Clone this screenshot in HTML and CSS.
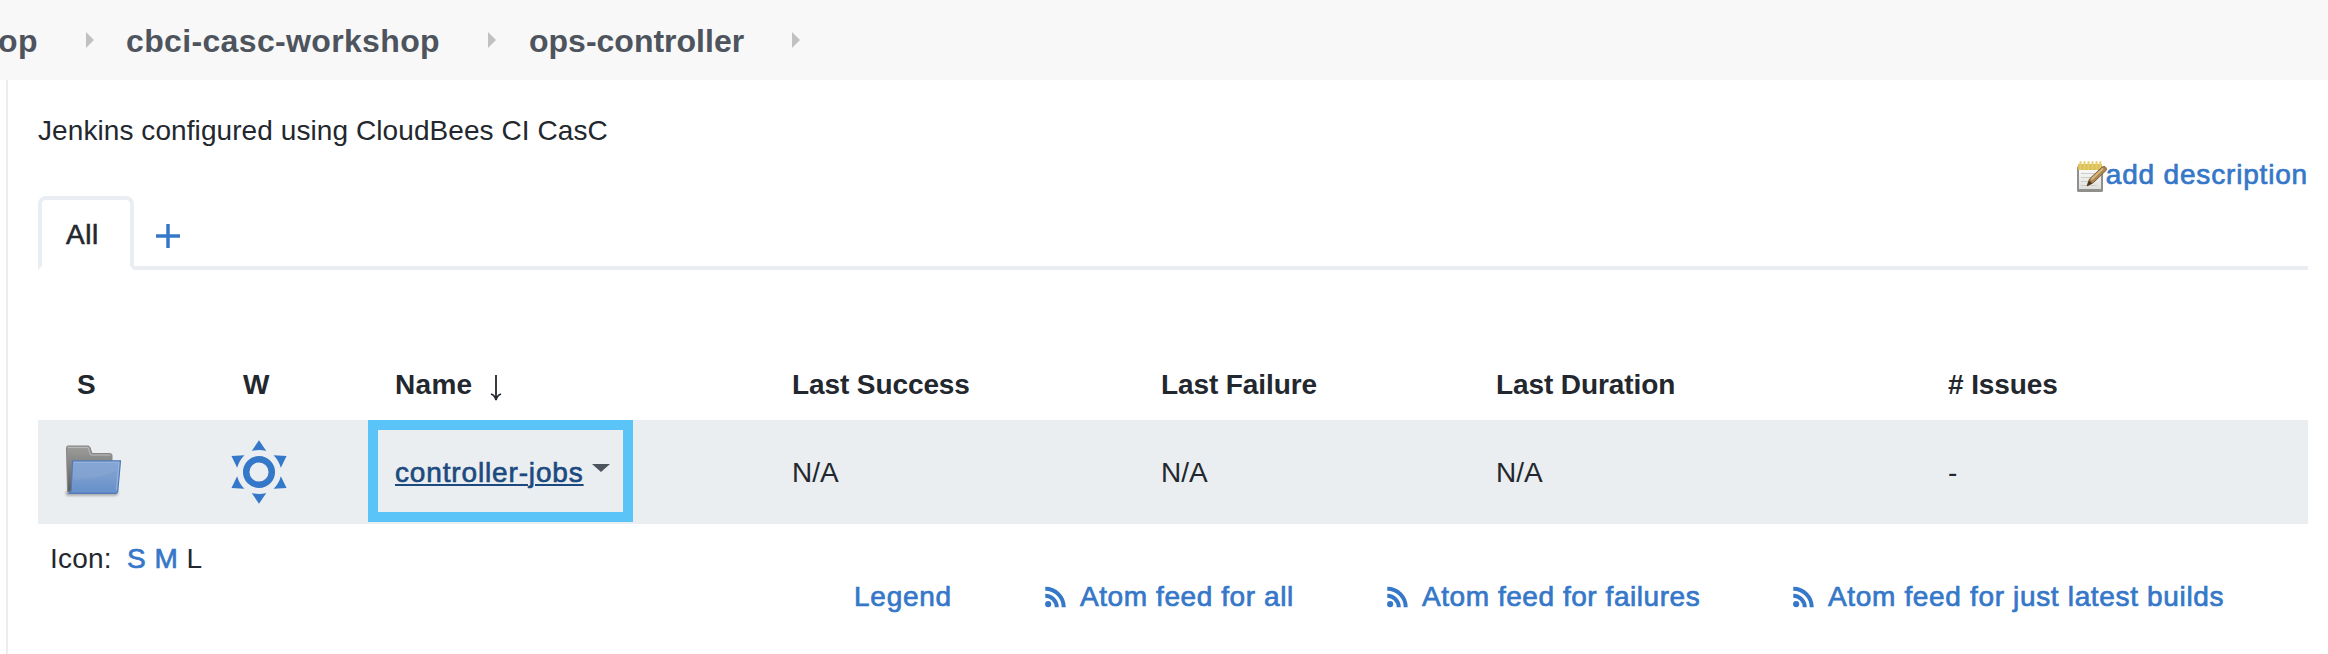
FILE: index.html
```html
<!DOCTYPE html>
<html lang="en">
<head>
<meta charset="utf-8">
<title>ops-controller</title>
<link rel="stylesheet" href="styles.css">
</head>
<body>
<nav class="breadcrumbs">
  <span class="crumb crumb-cut">op</span>
  <svg class="sep" viewBox="0 0 8 16"><path d="M0 0L8 8L0 16Z"/></svg>
  <span class="crumb crumb-workshop">cbci-casc-workshop</span>
  <svg class="sep" viewBox="0 0 8 16"><path d="M0 0L8 8L0 16Z"/></svg>
  <span class="crumb crumb-ops">ops-controller</span>
  <svg class="sep" viewBox="0 0 8 16"><path d="M0 0L8 8L0 16Z"/></svg>
</nav>
<main class="panel">
  <p class="message">Jenkins configured using CloudBees CI CasC</p>
  <div class="describe">
    <svg class="notepad" viewBox="0 0 31 32">
      <defs>
        <linearGradient id="paper" x1="0" y1="0" x2="0" y2="1"><stop offset="0" stop-color="#fdfdfd"/><stop offset="1" stop-color="#dfdfdd"/></linearGradient>
      </defs>
      <rect x="1" y="5" width="26" height="26" rx="1.5" fill="#8f908c"/>
      <rect x="3" y="5" width="22" height="23" fill="url(#paper)"/>
      <path d="M5 12.5H21M5 16.5H19M5 20.5H16M5 24.500H21" stroke="#cdcecb" stroke-width="1.2"/>
      <rect x="2" y="3" width="24" height="6" fill="#d9bd55"/>
      <path d="M4.500 1V8M8.500 1V8M12.500 1V8M16.500 1V8M20.500 1V8M24.300 1V8" stroke="#e6cd6c" stroke-width="2" stroke-linecap="round"/>
      <path d="M11 25L13.500 18L26 6.200Q30 4 30.500 9L17.500 21.500Z" fill="#ac8650" stroke="#806038" stroke-width="1"/>
      <path d="M15.500 18.500L27 7.500" stroke="#d7b987" stroke-width="1.800"/>
      <path d="M11 25L13 19.500L16.500 22.500Z" fill="#493621"/>
    </svg><a class="link">add description</a>
  </div>
  <div class="tabs">
    <div class="tab">All</div>
    <div class="tab-rest"><svg class="plus" viewBox="0 0 24 24"><path d="M12 0V24M0 12H24"/></svg></div>
  </div>
  <div class="jobs">
    <div class="row head">
      <span class="cell c-s">S</span>
      <span class="cell c-w">W</span>
      <span class="cell c-name"><span class="name">Name</span><svg class="arrow" viewBox="0 0 12 26"><path d="M6 0V24M1 19Q5 20.500 6 25Q7 20.500 11 19" /></svg></span>
      <span class="cell">Last Success</span>
      <span class="cell">Last Failure</span>
      <span class="cell">Last Duration</span>
      <span class="cell"># Issues</span>
    </div>
    <div class="row item">
      <svg class="folder" viewBox="0 0 60 56">
        <defs>
          <linearGradient id="back" x1="0" y1="0" x2="0" y2="1"><stop offset="0" stop-color="#9d9d9b"/><stop offset="1" stop-color="#5e5e5e"/></linearGradient>
          <linearGradient id="front" x1="0" y1="0" x2="0" y2="1"><stop offset="0" stop-color="#85a7d5"/><stop offset=".45" stop-color="#83a3d1"/><stop offset="1" stop-color="#6790cb"/></linearGradient>
          <filter id="soft" x="-10%" y="-20%" width="120%" height="140%"><feGaussianBlur stdDeviation="1.300"/></filter>
        </defs>
        <path d="M3 51L6 48H53L57 51L54 54H5Z" fill="#888" opacity=".6" filter="url(#soft)"/>
        <path d="M4.500 5.500Q4.500 4 6 4H26Q27.500 4 28 5.500L30 11.500H48Q50 11.500 50 13.500V50H5.500Z" fill="url(#back)" stroke="#858585" stroke-width="1"/>
        <path d="M6 5.500H26L28.500 13H48.500" fill="none" stroke="#b9b9b8" stroke-width="1"/>
        <path d="M10.500 18.800H58.500L55.800 49Q55.500 51.300 53.500 51.300H7.500Q9.500 50 9.500 43Z" fill="url(#front)" stroke="#5279b8" stroke-width="1.200"/>
        <path d="M12 20.300H57L54.500 48" fill="none" stroke="#98b5de" stroke-width="1"/>
        <path d="M12 38Q34 37 55 29L54 48H11Z" fill="#5f8aca" opacity=".2"/>
      </svg>
      <svg class="sun" viewBox="-32 -32 64 64">
        <defs><path id="ray" d="M0 -31.800L7.300 -21Q0 -23 -7.300 -21Z"/></defs>
        <circle r="12.800"/>
        <use href="#ray"/><use href="#ray" transform="rotate(60)"/><use href="#ray" transform="rotate(120)"/><use href="#ray" transform="rotate(180)"/><use href="#ray" transform="rotate(240)"/><use href="#ray" transform="rotate(300)"/>
      </svg>
      <div class="highlight"><a class="job">controller-jobs</a><svg class="caret" viewBox="0 0 18 8"><path d="M0 0H18L9 8Z"/></svg></div>
      <span class="cell">N/A</span>
      <span class="cell">N/A</span>
      <span class="cell">N/A</span>
      <span class="cell">-</span>
    </div>
  </div>
  <div class="sizes"><span class="size-label">Icon:</span><a class="link">S</a><a class="link">M</a><span>L</span></div>
  <div class="feeds">
    <a class="link legend">Legend</a>
    <a class="link feed f-all"><svg class="rss" viewBox="0 0 22 22"><circle cx="3.300" cy="18.500" r="3.200"/><path d="M.3 9.700A12 12 0 0 1 12.300 21.700M.3 2.400A19.300 19.300 0 0 1 19.600 21.700"/></svg>Atom feed for all</a>
    <a class="link feed f-fail"><svg class="rss" viewBox="0 0 22 22"><circle cx="3.300" cy="18.500" r="3.200"/><path d="M.3 9.700A12 12 0 0 1 12.300 21.700M.3 2.400A19.300 19.300 0 0 1 19.600 21.700"/></svg>Atom feed for failures</a>
    <a class="link feed f-last"><svg class="rss" viewBox="0 0 22 22"><circle cx="3.300" cy="18.500" r="3.200"/><path d="M.3 9.700A12 12 0 0 1 12.300 21.700M.3 2.400A19.300 19.300 0 0 1 19.600 21.700"/></svg>Atom feed for just latest builds</a>
  </div>
</main>
</body>
</html>
```
FILE: styles.css
```css
* { box-sizing: border-box; }
body {
  margin: 0;
  width: 2328px;
  height: 654px;
  overflow: hidden;
  background: #fff;
  color: #23272e;
  font: 28px/40px "Liberation Sans", Arial, sans-serif;
}
svg { display: block; flex: none; overflow: visible; }
.breadcrumbs {
  display: flex;
  height: 80px;
  padding-top: 21px;
  background: #f8f8f8;
  color: #4d545d;
  font-size: 32px;
  font-weight: bold;
  white-space: nowrap;
}
.crumb { flex: none; letter-spacing: .35px; }
.crumb-cut { width: 86px; margin-left: -2px; }
.crumb-workshop { width: 362px; }
.crumb-ops { width: 263px; margin-left: 1px; letter-spacing: 0; }
.sep { width: 8px; height: 16px; margin: 11px 32px 0 0; fill: #c0c1c2; }
.crumb-cut + .sep { margin-left: 2px; }
.panel {
  height: 574px;
  margin-left: 6px;
  padding: 31px 20px 0 30px;
  border-left: 2px solid #eaeef2;
}
.message { margin: 0; letter-spacing: .08px; }
.link {
  color: #3577c8;
  letter-spacing: .75px;
  -webkit-text-stroke: .7px #3577c8;
}
.describe { display: flex; justify-content: flex-end; height: 42px; padding-top: 4px; }
.describe .link { letter-spacing: .82px; }
.notepad { width: 31px; height: 32px; margin: 6px -1px 0 0; }
.tabs { display: flex; height: 74px; margin-top: 3px; }
.tab {
  width: 96px;
  height: 74px;
  padding: 15px 0 0 24px;
  border: 4px solid #eaeef2;
  border-bottom-color: transparent;
  border-radius: 8px 8px 0 0;
  letter-spacing: .5px;
  -webkit-text-stroke: .6px #23272e;
}
.tab-rest { flex: 1; margin-left: -1px; padding: 28px 0 0 23px; border-bottom: 4px solid #eaeef2; }
.plus { width: 24px; height: 24px; stroke: #3577c8; stroke-width: 3.5; }
.jobs { margin-top: 95px; }
.row {
  display: grid;
  grid-template-columns: 165px 165px 424px 369px 335px 452px 360px;
}
.head { height: 55px; font-weight: bold; letter-spacing: -.1px; }
.c-s { padding-left: 39px; }
.c-w { padding-left: 40px; }
.c-name { display: flex; padding-left: 27px; }
.name { width: 78px; letter-spacing: .3px; }
.arrow { width: 12px; height: 26px; margin: 10px 0 0 17px; fill: none; stroke: #23272e; stroke-width: 1.8; }
.item { height: 104px; background: #eaeef1; }
.item .cell { padding-top: 33px; }
.folder { width: 60px; height: 56px; margin: 22px 0 0 24px; }
.sun { width: 64px; height: 64px; margin: 20px 0 0 24px; fill: #3577c8; }
.sun circle { fill: none; stroke: #3577c8; stroke-width: 6.5; }
.highlight {
  display: flex;
  width: 265px;
  height: 102px;
  padding: 23px 0 0 17px;
  border: 10px solid #5ac3f8;
}
.job {
  width: 189px;
  height: 40px;
  color: #1c4a7f;
  letter-spacing: .85px;
  white-space: nowrap;
  text-decoration: underline;
  text-decoration-thickness: 2px;
  text-underline-offset: 2px;
  -webkit-text-stroke: .65px #1c4a7f;
}
.caret { width: 18px; height: 8px; margin: 11px 0 0 8px; fill: #4d545d; }
.sizes { display: flex; gap: 8px; height: 40px; margin: 15px 0 0 12px; }
.size-label { width: 69px; letter-spacing: .2px; }
.feeds { display: flex; height: 40px; margin-top: -2px; padding-left: 816px; white-space: nowrap; }
.feed { display: flex; gap: 14px; }
.legend { width: 191px; }
.f-all { width: 342px; letter-spacing: .58px; }
.f-fail { width: 406px; letter-spacing: .55px; }
.f-last { letter-spacing: .66px; }
.rss { width: 21px; height: 22px; margin-top: 9px; fill: #3577c8; }
.rss path { fill: none; stroke: #3577c8; stroke-width: 4.2; }
```
